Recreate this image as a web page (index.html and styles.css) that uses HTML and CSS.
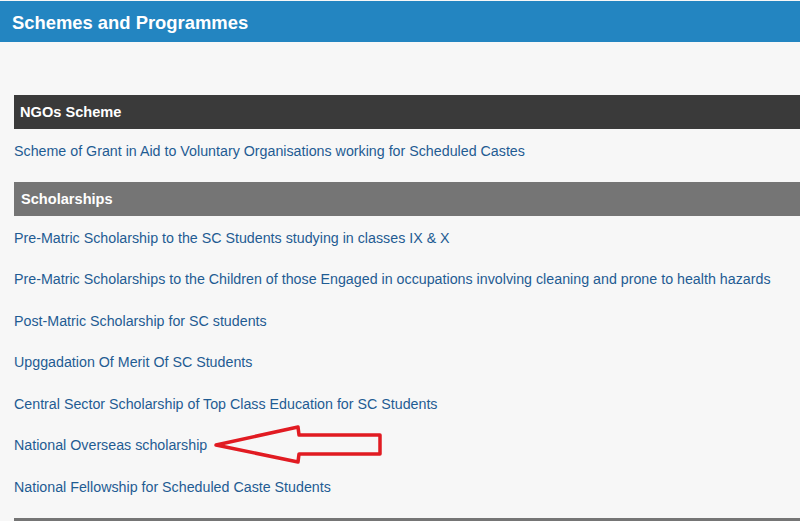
FILE: index.html
```html
<!DOCTYPE html>
<html>
<head>
<meta charset="utf-8">
<link rel="stylesheet" href="styles.css">
</head>
<body>
<div class="page">
  <header class="title-bar"><h1>Schemes and Programmes</h1></header>
  <main class="content">
    <section class="section">
      <h2 class="section-head dark">NGOs Scheme</h2>
      <ul class="links">
        <li><a href="#">Scheme of Grant in Aid to Voluntary Organisations working for Scheduled Castes</a></li>
      </ul>
    </section>
    <section class="section">
      <h2 class="section-head grey">Scholarships</h2>
      <ul class="links">
        <li><a href="#">Pre-Matric Scholarship to the SC Students studying in classes IX &amp; X</a></li>
        <li><a href="#">Pre-Matric Scholarships to the Children of those Engaged in occupations involving cleaning and prone to health hazards</a></li>
        <li><a href="#">Post-Matric Scholarship for SC students</a></li>
        <li><a href="#">Upggadation Of Merit Of SC Students</a></li>
        <li><a href="#">Central Sector Scholarship of Top Class Education for SC Students</a></li>
        <li><a href="#">National Overseas scholarship</a></li>
        <li><a href="#">National Fellowship for Scheduled Caste Students</a></li>
      </ul>
    </section>
    <section class="section">
      <h2 class="section-head grey">&nbsp;</h2>
    </section>
  </main>
  <svg class="arrow" width="180" height="50" viewBox="210 420 180 50">
    <polygon points="216,445 298,427 299,435 380,435 380,454 299,454 298,462" fill="none" stroke="#e11b22" stroke-width="3.5" stroke-linejoin="round"/>
  </svg>
</div>
</body>
</html>
```
FILE: styles.css
```css
html, body {
  margin: 0;
  padding: 0;
  background: #f7f7f7;
  overflow: hidden;
}
body {
  font-family: "Liberation Sans", Arial, sans-serif;
  padding-top: 1px;
}
.page {
  position: relative;
}
.title-bar {
  background: #2385c1;
  height: 41px;
  display: flex;
  align-items: center;
  padding-left: 12px;
}
.title-bar h1 {
  margin: 0;
  color: #fff;
  font-size: 18.4px;
  font-weight: bold;
  line-height: 22px;
  padding-top: 2px;
}
.content {
  padding: 53px 0 0 14px;
}
.section {
  margin-bottom: 11.5px;
}
.section-head {
  margin: 0;
  height: 34px;
  line-height: 35px;
  padding-left: 6px;
  color: #fff;
  font-size: 14.6px;
  font-weight: bold;
}
.section-head.dark {
  background: #3a3a3a;
}
.section-head.grey {
  background: #757575;
  padding-left: 7px;
}
.links {
  list-style: none;
  margin: 0;
  padding: 0;
}
.links li {
  padding: 11.5px 0 10px;
  line-height: 20px;
  font-size: 14.25px;
}
.links a {
  color: #1f5c93;
  text-decoration: none;
}
.arrow {
  position: absolute;
  left: 210px;
  top: 419px;
}
```
